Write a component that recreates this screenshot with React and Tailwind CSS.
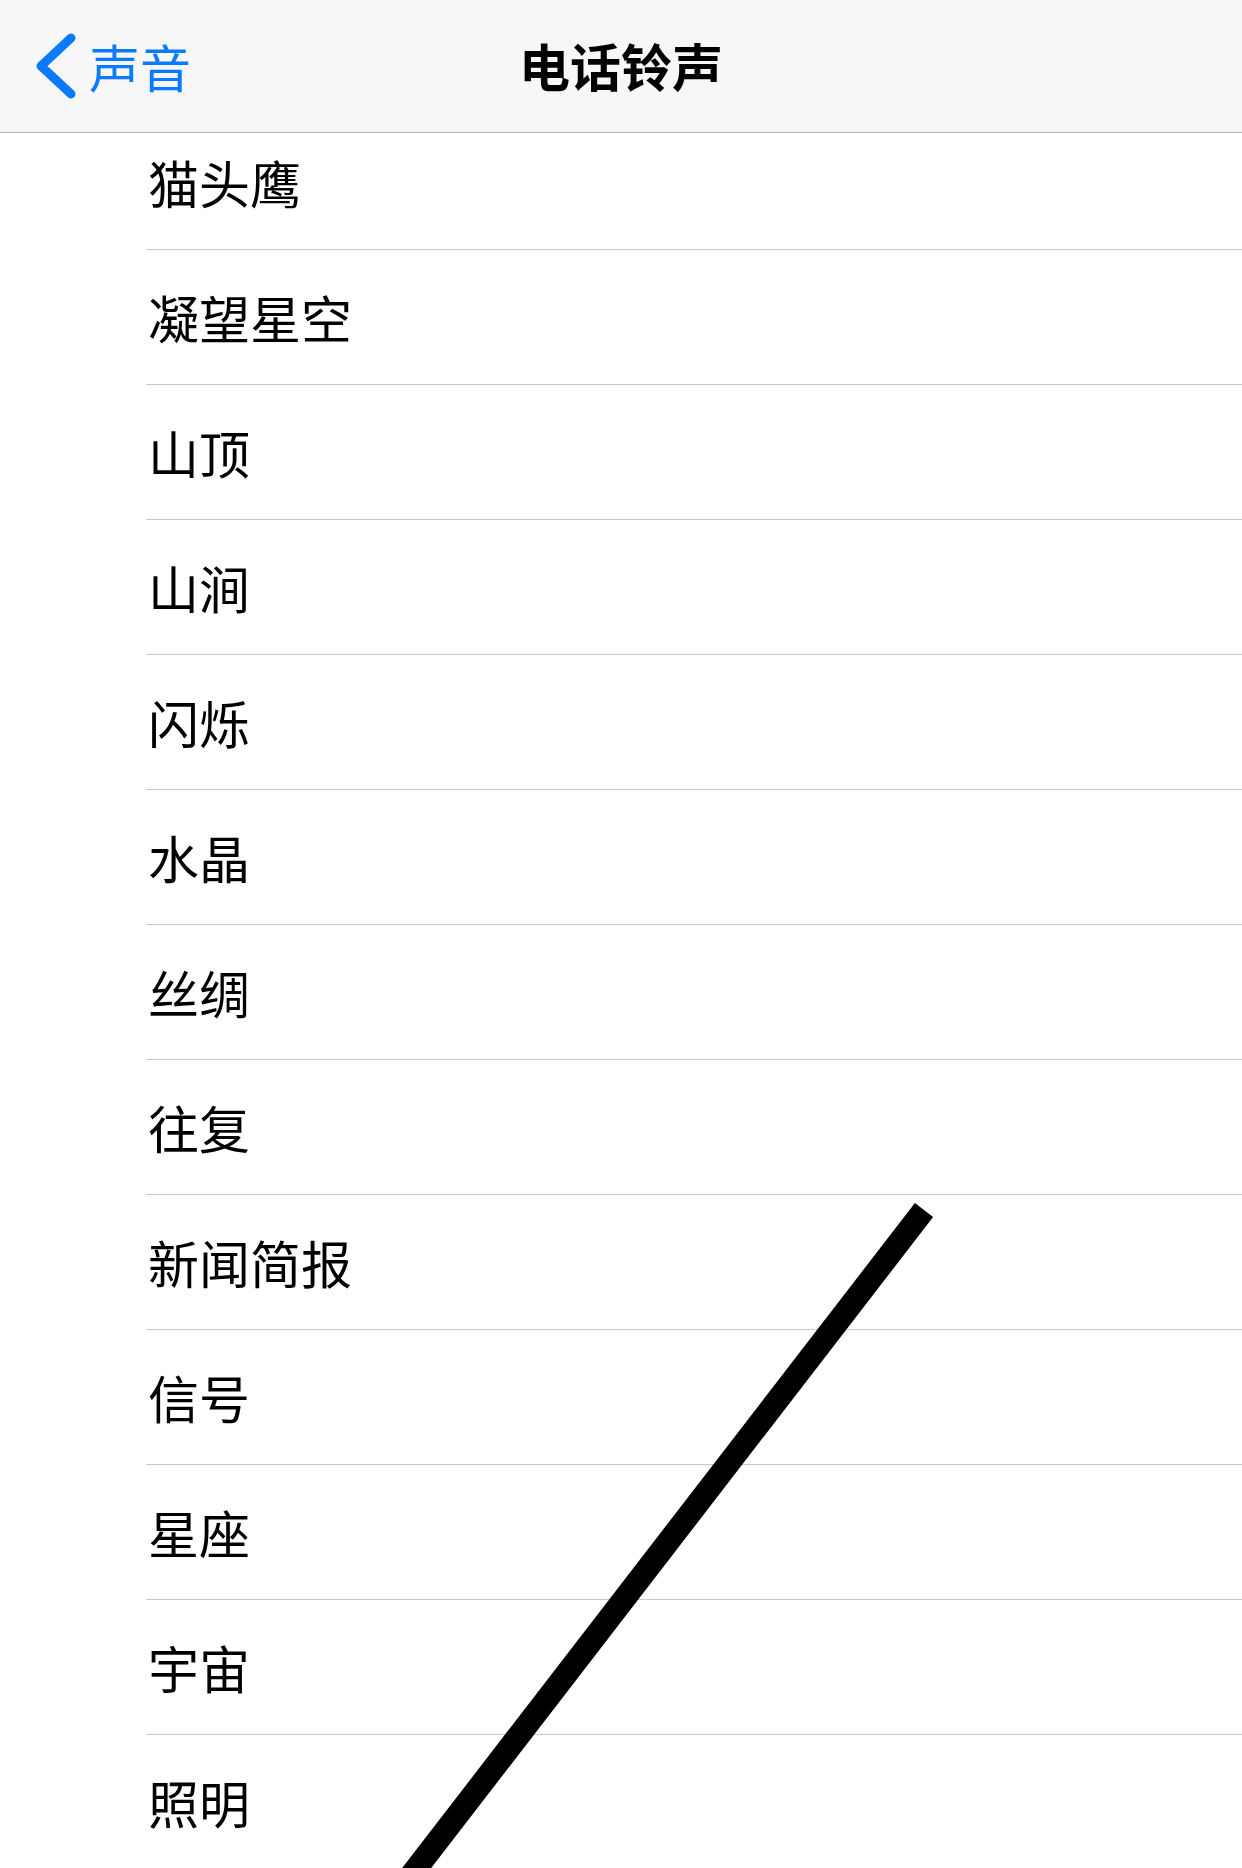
import React from "react";

const ringtones = [
  "猫头鹰",
  "凝望星空",
  "山顶",
  "山涧",
  "闪烁",
  "水晶",
  "丝绸",
  "往复",
  "新闻简报",
  "信号",
  "星座",
  "宇宙",
  "照明",
];

const font = {
  fontFamily: '"Noto Sans CJK SC", "Noto Sans", sans-serif',
};

const App = () => {
  return (
    <div
      className="relative w-[1242px] h-[1868px] overflow-hidden bg-white"
      style={font}
    >
      {/* Nav bar */}
      <div className="relative z-10 grid grid-cols-[1fr_auto_1fr] items-center h-[133px] bg-[#f7f7f7] border-b border-[#b2b2b2]">
        <div className="flex items-center pl-[35px]">
          <svg width="42" height="68" viewBox="0 0 42 68" fill="none">
            <path
              d="M36 6 L6 34 L36 62"
              stroke="#0a7aff"
              strokeWidth="9"
              strokeLinecap="round"
              strokeLinejoin="round"
            />
          </svg>
          <span className="ml-[12px] text-[51px] leading-none text-[#0a7aff]">
            声音
          </span>
        </div>
        <h1 className="text-[51px] leading-none font-semibold text-black -mt-[2px]">
          电话铃声
        </h1>
        <div />
      </div>

      {/* Ringtone list, scrolled a little under the bar */}
      <div className="-mt-[18px]">
        {ringtones.map((name) => (
          <div key={name} className="pl-[146px]">
            <div className="flex items-center h-[135px] border-b border-[#c8c7cc]">
              <span className="ml-[2px] text-[51px] leading-none text-black">
                {name}
              </span>
            </div>
          </div>
        ))}
      </div>

      {/* Hand-drawn stroke over the screenshot */}
      <svg
        className="absolute inset-0 pointer-events-none"
        width="1242"
        height="1868"
        viewBox="0 0 1242 1868"
      >
        <line
          x1="924"
          y1="1210"
          x2="392"
          y2="1900"
          stroke="#000"
          strokeWidth="23"
          strokeLinecap="butt"
        />
      </svg>
    </div>
  );
};

export default App;
